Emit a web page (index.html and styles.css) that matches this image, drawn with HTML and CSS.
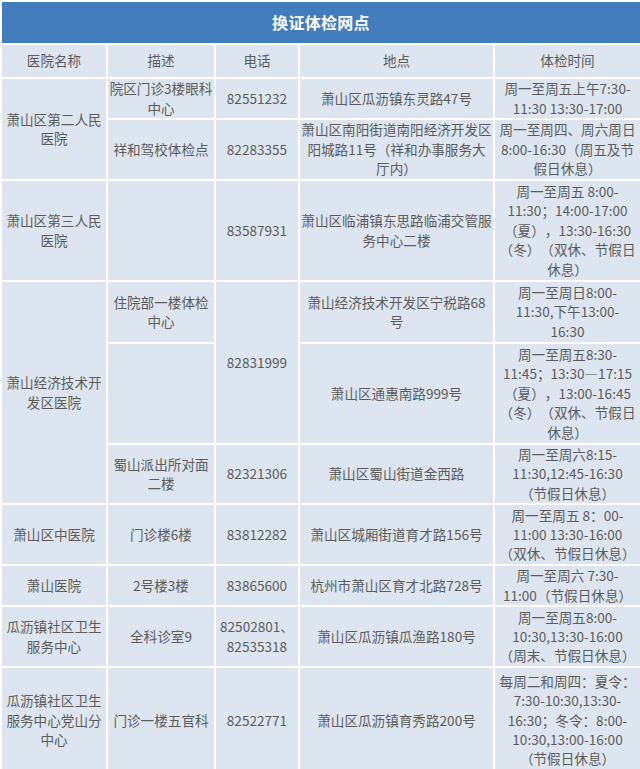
FILE: index.html
```html
<!DOCTYPE html>
<html lang="zh-CN">
<head>
<meta charset="utf-8">
<title>换证体检网点</title>
<link rel="stylesheet" href="styles.css">
</head>
<body>
<table class="sheet">
  <colgroup>
    <col class="c-name">
    <col class="c-desc">
    <col class="c-tel">
    <col class="c-addr">
    <col class="c-time">
  </colgroup>
  <thead>
    <tr class="h-title"><th class="title" colspan="5">换证体检网点</th></tr>
    <tr class="h-head">
      <th>医院名称</th><th>描述</th><th>电话</th><th>地点</th><th>体检时间</th>
    </tr>
  </thead>
  <tbody>
    <tr class="h39">
      <td rowspan="2">萧山区第二人民<br>医院</td>
      <td>院区门诊3楼眼科<br>中心</td>
      <td>82551232</td>
      <td>萧山区瓜沥镇东灵路47号</td>
      <td>周一至周五上午7:30-<br>11:30 13:30-17:00</td>
    </tr>
    <tr class="h59">
      <td>祥和驾校体检点</td>
      <td>82283355</td>
      <td>萧山区南阳街道南阳经济开发区<br>阳城路11号（祥和办事服务大<br>厅内）</td>
      <td>周一至周四、周六周日<br>8:00-16:30（周五及节<br>假日休息）</td>
    </tr>
    <tr class="h99">
      <td>萧山区第三人民<br>医院</td>
      <td></td>
      <td>83587931</td>
      <td>萧山区临浦镇东思路临浦交管服<br>务中心二楼</td>
      <td>周一至周五 8:00-<br>11:30；14:00-17:00<br>（夏），13:30-16:30<br>（冬）（双休、节假日<br>休息）</td>
    </tr>
    <tr class="h60">
      <td rowspan="3">萧山经济技术开<br>发区医院</td>
      <td>住院部一楼体检<br>中心</td>
      <td rowspan="2">82831999</td>
      <td>萧山经济技术开发区宁税路68<br>号</td>
      <td>周一至周日8:00-<br>11:30,下午13:00-<br>16:30</td>
    </tr>
    <tr class="h99">
      <td></td>
      <td>萧山区通惠南路999号</td>
      <td>周一至周五8:30-<br>11:45；13:30—17:15<br>（夏），13:00-16:45<br>（冬）（双休、节假日<br>休息）</td>
    </tr>
    <tr class="h57">
      <td>蜀山派出所对面<br>二楼</td>
      <td>82321306</td>
      <td>萧山区蜀山街道金西路</td>
      <td>周一至周六8:15-<br>11:30,12:45-16:30<br>（节假日休息）</td>
    </tr>
    <tr class="h59">
      <td>萧山区中医院</td>
      <td>门诊楼6楼</td>
      <td>83812282</td>
      <td>萧山区城厢街道育才路156号</td>
      <td>周一至周五 8：00-<br>11:00 13:30-16:00<br>（双休、节假日休息）</td>
    </tr>
    <tr class="h39">
      <td>萧山医院</td>
      <td>2号楼3楼</td>
      <td>83865600</td>
      <td>杭州市萧山区育才北路728号</td>
      <td>周一至周六 7:30-<br>11:00（节假日休息）</td>
    </tr>
    <tr class="h59">
      <td>瓜沥镇社区卫生<br>服务中心</td>
      <td>全科诊室9</td>
      <td>82502801、<br>82535318</td>
      <td>萧山区瓜沥镇瓜渔路180号</td>
      <td>周一至周五8:00-<br>10:30,13:30-16:00<br>（周末、节假日休息）</td>
    </tr>
    <tr class="h104">
      <td>瓜沥镇社区卫生<br>服务中心党山分<br>中心</td>
      <td>门诊一楼五官科</td>
      <td>82522771</td>
      <td>萧山区瓜沥镇育秀路200号</td>
      <td>每周二和周四：夏令：<br>7:30-10:30,13:30-<br>16:30；冬令：8:00-<br>10:30,13:00-16:00<br>（节假日休息）</td>
    </tr>
  </tbody>
</table>
</body>
</html>
```

FILE: styles.css
```css
html, body {
  margin: 0;
  padding: 0;
  background: #ffffff;
  overflow: hidden;
}

.sheet {
  width: 642px;
  table-layout: fixed;
  border-collapse: separate;
  border-spacing: 2px;
  font-family: "Noto Sans CJK SC", "Microsoft YaHei", "Noto Sans", sans-serif;
  font-size: 13.6px;
  line-height: 19.4px;
  color: #5c5c5c;
  text-spacing-trim: space-all;
}

.c-name { width: 104px; }
.c-desc { width: 106px; }
.c-tel  { width: 82px; }
.c-addr { width: 193px; }
.c-time { width: 145px; }

.sheet th,
.sheet td {
  background: #dde6f0;
  text-align: center;
  vertical-align: middle;
  padding: 0;
  white-space: nowrap;
  font-weight: normal;
}

.sheet th.title {
  background: #437cbd;
  color: #ffffff;
  font-size: 16px;
  font-weight: bold;
  letter-spacing: 0.3px;
}

.h-title { height: 41px; }
.h-head { height: 32px; }
.h39 { height: 39px; }
.h57 { height: 57px; }
.h59 { height: 59px; }
.h60 { height: 60px; }
.h99 { height: 99px; }
.h104 { height: 104px; }
```
